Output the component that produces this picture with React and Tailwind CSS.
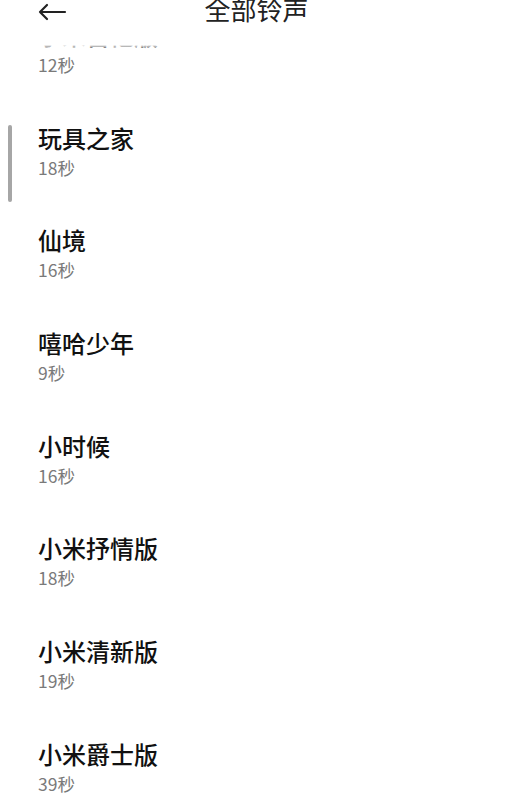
import React from 'react';

const rings = [
  { name: '小米吉他版', dur: '12秒' },
  { name: '玩具之家', dur: '18秒' },
  { name: '仙境', dur: '16秒' },
  { name: '嘻哈少年', dur: '9秒' },
  { name: '小时候', dur: '16秒' },
  { name: '小米抒情版', dur: '18秒' },
  { name: '小米清新版', dur: '19秒' },
  { name: '小米爵士版', dur: '39秒' },
];

const font = { fontFamily: '"Noto Sans CJK SC", "Noto Sans", Roboto, sans-serif' };

export default function App() {
  return (
    <div className="relative h-[795px] w-[513px] overflow-hidden bg-white" style={font}>
      {/* List */}
      <div className="pt-[20px]">
        {rings.map((r, i) => (
          <div key={i} className="h-[102.67px] pl-[38px]">
            <div className="text-[24px] leading-[30px] font-medium text-[#111]">{r.name}</div>
            <div className="mt-[3px] text-[17.5px] leading-[24px] text-[#7a7a7a]">{r.dur}</div>
          </div>
        ))}
      </div>

      {/* Header overlay */}
      <div className="absolute inset-x-0 top-0 z-10 flex flex-col">
        <div className="flex h-[45px] items-start bg-white">
          <div className="flex h-[24px] w-full items-center px-[37px]">
            <svg className="shrink-0" width="30" height="18" viewBox="0 0 30 18" fill="none" stroke="#222" strokeWidth="2.2" strokeLinecap="round" strokeLinejoin="round">
              <path d="M28 9H3M10 2L3 9l7 7" />
            </svg>
            <div className="flex-1 -translate-y-[3px] pr-[30px] text-center text-[26px] leading-[24px] text-[#222]">全部铃声</div>
          </div>
        </div>
        <div className="h-[5px] bg-gradient-to-b from-white to-white/0" />
      </div>

      {/* Scrollbar */}
      <div className="absolute left-[8px] top-[125px] h-[77px] w-[4px] rounded-full bg-[#a6a6a6]" />
    </div>
  );
}
